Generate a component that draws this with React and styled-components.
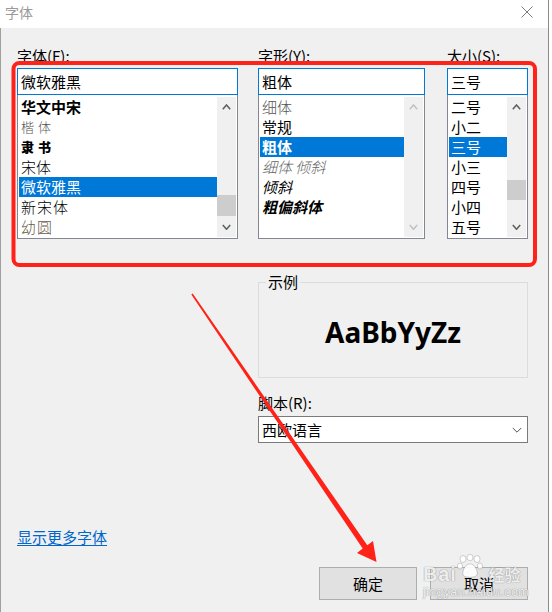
import React from 'react';
import styled, { createGlobalStyle } from 'styled-components';

const GlobalStyle = createGlobalStyle`
  html, body {
    margin: 0;
    padding: 0;
    background: #ffffff;
  }
  body {
    font-family: "Noto Sans CJK SC", "Noto Sans", sans-serif;
    color: #000;
  }
`;

const Page = styled.div`
  position: relative;
  display: flex;
  width: 552px;
  height: 612px;
  overflow: hidden;
`;

const Dialog = styled.div`
  width: 548px;
  display: flex;
  flex-direction: column;
  border-right: 1px solid #8a8a8a;
`;

const BackWindow = styled.div`
  flex: 1;
  background: #ffffff;
`;

const TitleBar = styled.div`
  height: 28px;
  box-sizing: border-box;
  background: #ffffff;
  display: flex;
  align-items: flex-start;
  justify-content: space-between;
  padding: 4px 15px 0 5px;
`;

const TitleText = styled.span`
  font-size: 14px;
  line-height: 17px;
  color: #9a9a9a;
`;

const CloseIcon = styled.svg`
  margin-top: 2px;
`;

const Body = styled.div`
  flex: 1;
  background: #f0f0f0;
  border-left: 1px solid #a0a0a0;
  padding: 19px 20px 0 16px;
  display: flex;
  flex-direction: column;
`;

const PickerRow = styled.div`
  display: flex;
`;

const Column = styled.div`
  width: ${p => p.$w}px;
  margin-left: ${p => p.$ml || 0}px;
  display: flex;
  flex-direction: column;
`;

const FieldLabel = styled.div`
  font-size: 15px;
  line-height: 18px;
  height: 18px;
  margin-bottom: 3px;
  white-space: nowrap;
`;

const TextBox = styled.div`
  height: 27px;
  box-sizing: border-box;
  border: 1px solid #0078d7;
  background: #ffffff;
  padding: 0 3px;
  font-size: 15px;
  line-height: 25px;
  white-space: nowrap;
`;

const ListBox = styled.div`
  height: 144px;
  box-sizing: border-box;
  border: 1px solid #828790;
  border-top: none;
  background: #ffffff;
  padding: 2px 1px 1px 1px;
  display: flex;
`;

const Items = styled.div`
  flex: 1;
  min-width: 0;
  display: flex;
  flex-direction: column;
`;

const Item = styled.div`
  height: 20px;
  line-height: 20px;
  padding-left: 2px;
  font-size: ${p => p.$size || 15}px;
  font-weight: ${p => p.$weight || 400};
  font-style: ${p => (p.$italic ? 'italic' : 'normal')};
  letter-spacing: ${p => p.$spacing || 0}px;
  white-space: nowrap;
  background: ${p => (p.$selected ? '#0078d7' : 'transparent')};
  color: ${p => (p.$selected ? '#ffffff' : p.$color || '#000000')};
`;

const ScrollBar = styled.div`
  width: 19px;
  background: #f0f0f0;
  display: flex;
  flex-direction: column;
`;

const ScrollArrow = styled.div`
  height: 20px;
  display: flex;
  align-items: center;
  justify-content: center;
`;

const ScrollTrack = styled.div`
  flex: 1;
  display: flex;
  flex-direction: column;
`;

const Thumb = styled.div`
  margin-top: ${p => p.$top}px;
  height: ${p => p.$h}px;
  background: #cdcdcd;
`;

const Lower = styled.div`
  margin-left: 241px;
  width: 270px;
  margin-top: 35px;
  display: flex;
  flex-direction: column;
`;

const SampleGroup = styled.fieldset`
  margin: 0;
  padding: 0;
  min-width: 0;
  height: 104px;
  box-sizing: border-box;
  border: 1px solid #dcdcdc;
  text-align: center;
`;

const GroupLegend = styled.legend`
  margin-left: 7px;
  padding: 0 2px;
  font-size: 15px;
  line-height: 16px;
  text-align: left;
`;

const SampleText = styled.div`
  margin-top: 26px;
  font-family: "Noto Sans", "Open Sans", sans-serif;
  font-weight: 700;
  font-size: 28px;
  line-height: 32px;
`;

const ScriptLabel = styled(FieldLabel)`
  margin-top: 16px;
  margin-bottom: 4px;
`;

const SelectBox = styled.div`
  height: 27px;
  box-sizing: border-box;
  border: 1px solid #7a7a7a;
  background: #ffffff;
  display: flex;
  align-items: center;
  justify-content: space-between;
  padding: 0 5px 0 3px;
  font-size: 15px;
  line-height: 25px;
`;

const MoreFonts = styled.a`
  margin-top: 85px;
  align-self: flex-start;
  font-size: 15px;
  line-height: 18px;
  color: #0066cc;
  text-decoration: underline;
  text-underline-offset: 2px;
  cursor: pointer;
`;

const ButtonRow = styled.div`
  margin-top: 21px;
  display: flex;
  justify-content: flex-end;
  gap: 13px;
`;

const Button = styled.button`
  width: 98px;
  height: 33px;
  box-sizing: border-box;
  border: 1px solid #adadad;
  background: #e1e1e1;
  font-family: "Noto Sans CJK SC", sans-serif;
  font-size: 15px;
  color: #000;
  padding: 0;
`;

const Overlay = styled.svg`
  position: absolute;
  left: 0;
  top: 0;
  pointer-events: none;
`;

const Watermark = styled.div`
  position: absolute;
  left: 423px;
  top: 550px;
  width: 106px;
  pointer-events: none;
  color: rgba(255, 255, 255, 0.9);
  text-shadow: 0 0 1px rgba(0, 0, 0, 0.35), 0 0 1px rgba(0, 0, 0, 0.25);
  display: flex;
  flex-direction: column;
`;

const MarkTop = styled.div`
  display: flex;
  align-items: flex-end;
  height: 34px;
`;

const MarkBrand = styled.span`
  font-family: "Liberation Sans", sans-serif;
  font-weight: 700;
  font-size: 20px;
  line-height: 20px;
  letter-spacing: 0.8px;
`;

const MarkCn = styled.span`
  font-size: 16px;
  line-height: 20px;
  font-weight: 700;
  margin-left: 6px;
`;

const MarkUrl = styled.span`
  font-family: "Liberation Sans", sans-serif;
  font-size: 12.5px;
  line-height: 16px;
  letter-spacing: 0.3px;
`;

function Chevron({ dir = 'up', color = '#606060', w = 9, h = 6, sw = 1.6 }) {
  const d =
    dir === 'up'
      ? `M0.8 ${h - 0.8} L${w / 2} 1 L${w - 0.8} ${h - 0.8}`
      : `M0.8 1 L${w / 2} ${h - 0.8} L${w - 0.8} 1`;
  return (
    <svg width={w} height={h} viewBox={`0 0 ${w} ${h}`}>
      <path d={d} fill="none" stroke={color} strokeWidth={sw} />
    </svg>
  );
}

function Scroll({ thumb, disabled }) {
  const color = disabled ? '#c2c2c2' : '#606060';
  return (
    <ScrollBar>
      <ScrollArrow>
        <Chevron dir="up" color={color} />
      </ScrollArrow>
      <ScrollTrack>{thumb && <Thumb $top={thumb.top} $h={thumb.h} />}</ScrollTrack>
      <ScrollArrow>
        <Chevron dir="down" color={color} />
      </ScrollArrow>
    </ScrollBar>
  );
}

const fontNames = [
  { label: '华文中宋', weight: 700 },
  { label: '楷体', size: 13, spacing: 4, color: '#555555', weight: 300 },
  { label: '隶书', size: 13, spacing: 4, weight: 900 },
  { label: '宋体', weight: 300 },
  { label: '微软雅黑', selected: true },
  { label: '新宋体', weight: 300, spacing: 1 },
  { label: '幼圆', color: '#6a5a4a', weight: 300, spacing: 1 },
];

const fontStyles = [
  { label: '细体', color: '#555555', weight: 300 },
  { label: '常规' },
  { label: '粗体', selected: true, weight: 700 },
  { label: '细体 倾斜', italic: true, color: '#666666', weight: 300 },
  { label: '倾斜', italic: true },
  { label: '粗偏斜体', italic: true, weight: 700 },
];

const fontSizes = ['二号', '小二', '三号', '小三', '四号', '小四', '五号'];

function App() {
  return (
    <Page>
      <GlobalStyle />
      <Dialog>
        <TitleBar>
          <TitleText>字体</TitleText>
          <CloseIcon width="12" height="12" viewBox="0 0 12 12">
            <path d="M0.5 0.5 L11.5 11.5 M11.5 0.5 L0.5 11.5" stroke="#7a7a7a" strokeWidth="1" />
          </CloseIcon>
        </TitleBar>

        <Body>
          <PickerRow>
            <Column $w={221}>
              <FieldLabel>字体(F):</FieldLabel>
              <TextBox>微软雅黑</TextBox>
              <ListBox>
                <Items>
                  {fontNames.map(f => (
                    <Item
                      key={f.label}
                      $selected={f.selected}
                      $size={f.size}
                      $weight={f.weight}
                      $spacing={f.spacing}
                      $color={f.color}
                    >
                      {f.label}
                    </Item>
                  ))}
                </Items>
                <Scroll thumb={{ top: 78, h: 21 }} />
              </ListBox>
            </Column>

            <Column $w={167} $ml={20}>
              <FieldLabel>字形(Y):</FieldLabel>
              <TextBox>粗体</TextBox>
              <ListBox>
                <Items>
                  {fontStyles.map(s => (
                    <Item
                      key={s.label}
                      $selected={s.selected}
                      $weight={s.weight}
                      $italic={s.italic}
                      $color={s.color}
                    >
                      {s.label}
                    </Item>
                  ))}
                </Items>
                <Scroll disabled />
              </ListBox>
            </Column>

            <Column $w={81} $ml={22}>
              <FieldLabel>大小(S):</FieldLabel>
              <TextBox>三号</TextBox>
              <ListBox>
                <Items>
                  {fontSizes.map(s => (
                    <Item key={s} $selected={s === '三号'}>
                      {s}
                    </Item>
                  ))}
                </Items>
                <Scroll thumb={{ top: 63, h: 20 }} />
              </ListBox>
            </Column>
          </PickerRow>

          <Lower>
            <SampleGroup>
              <GroupLegend>示例</GroupLegend>
              <SampleText>AaBbYyZz</SampleText>
            </SampleGroup>
            <ScriptLabel>脚本(R):</ScriptLabel>
            <SelectBox>
              <span>西欧语言</span>
              <Chevron dir="down" color="#505050" w={10} h={6} sw={1} />
            </SelectBox>
          </Lower>

          <MoreFonts>显示更多字体</MoreFonts>

          <ButtonRow>
            <Button>确定</Button>
            <Button>取消</Button>
          </ButtonRow>
        </Body>
      </Dialog>
      <BackWindow />

      <Overlay width="552" height="612" viewBox="0 0 552 612">
        <rect x="13.5" y="63" width="521.5" height="202" rx="6" fill="none" stroke="#fe2218" strokeWidth="4" />
        <polygon
          points="192.7,293.5 367.3,545.3 373,541 376.5,562 357,553 362.7,548.6 191.3,294.5"
          fill="#fe2218"
        />
      </Overlay>

      <Watermark>
        <MarkTop>
          <MarkBrand>Bai</MarkBrand>
          <svg width="26" height="30" viewBox="0 0 26 30">
            <g fill="rgba(255,255,255,0.9)" stroke="rgba(0,0,0,0.22)" strokeWidth="0.8">
              <ellipse cx="6" cy="5" rx="3" ry="3.5" />
              <ellipse cx="13" cy="3.5" rx="3" ry="3.2" />
              <ellipse cx="20" cy="5" rx="3" ry="3.5" />
              <ellipse cx="3" cy="12" rx="2.6" ry="3" />
              <ellipse cx="23" cy="12" rx="2.6" ry="3" />
              <path d="M13 10 C8 10 5 17 6 21 C7 24 19 24 20 21 C21 17 18 10 13 10 Z" />
            </g>
          </svg>
          <MarkCn>经验</MarkCn>
        </MarkTop>
        <MarkUrl>jingyan.baidu.com</MarkUrl>
      </Watermark>
    </Page>
  );
}

export default App;
